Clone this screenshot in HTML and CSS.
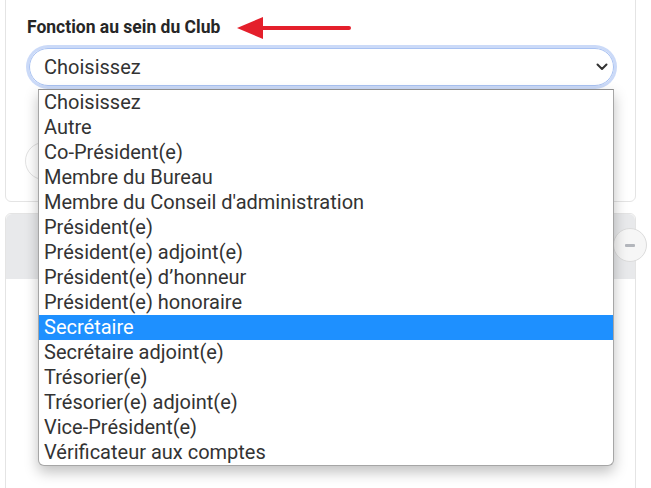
FILE: index.html
```html
<!DOCTYPE html>
<html lang="fr">
<head>
    <meta charset="UTF-8">
    <meta name="viewport" content="width=device-width, initial-scale=1.0">
    <title>Fonction au sein du Club</title>
    <link rel="stylesheet" href="styles.css">
</head>
<body>
    <div class="page">
        <div class="card card-top">
            <div class="field">
                <div class="label-row">
                    <label class="label">Fonction au sein du Club</label>
                    <svg class="arrow" width="116" height="24" viewBox="0 0 116 24">
                        <path d="M22 12 H112" stroke="#e41f2b" stroke-width="4" stroke-linecap="round"/>
                        <path d="M0 12 L26 1 L26 23 Z" fill="#e41f2b"/>
                    </svg>
                </div>
                <div class="select-wrap">
                    <div class="select focused">
                        <span>Choisissez</span>
                        <svg class="chevron" width="12" height="8" viewBox="0 0 12 8">
                            <path d="M1.5 1.5 L6 6 L10.5 1.5" fill="none" stroke="#333" stroke-width="2" stroke-linecap="round" stroke-linejoin="round"/>
                        </svg>
                    </div>
                    <!-- liste ouverte -->
                    <ul class="menu">
                        <li>Choisissez</li>
                        <li>Autre</li>
                        <li>Co-Président(e)</li>
                        <li>Membre du Bureau</li>
                        <li>Membre du Conseil d'administration</li>
                        <li>Président(e)</li>
                        <li>Président(e) adjoint(e)</li>
                        <li>Président(e) d’honneur</li>
                        <li>Président(e) honoraire</li>
                        <li class="active">Secrétaire</li>
                        <li>Secrétaire adjoint(e)</li>
                        <li>Trésorier(e)</li>
                        <li>Trésorier(e) adjoint(e)</li>
                        <li>Vice-Président(e)</li>
                        <li>Vérificateur aux comptes</li>
                    </ul>
                </div>
                <div class="select plain"></div>
            </div>
        </div>

        <div class="card card-bottom">
            <div class="card-header">
                <span class="toggle"><span class="minus"></span></span>
            </div>
            <div class="card-body"></div>
        </div>
    </div>
</body>
</html>
```

FILE: styles.css
```css
body {
    margin: 0;
    background: #fff;
    font-family: Roboto, "Noto Sans", sans-serif;
    color: #333;
    overflow: hidden;
}

.page {
    width: 631px;
    padding-left: 5px;
}

.card {
    border: 1px solid #e4e4e4;
    border-radius: 6px;
    background: #fff;
}

.card-top {
    margin-top: -10px;
    height: 212px;
    box-sizing: border-box;
    padding: 25px 20px 0 21px;
}

.label-row {
    display: flex;
    align-items: center;
    gap: 17px;
    height: 22px;
}

.label {
    font-weight: 700;
    font-size: 17.5px;
    color: #262626;
}

.arrow {
    display: block;
    margin-top: 2px;
}

.select-wrap {
    position: relative;
    margin: 10px 0 0 2px;
}

.select {
    height: 38px;
    box-sizing: border-box;
    border: 1px solid #cfcfcf;
    border-radius: 19px;
    display: flex;
    align-items: center;
    justify-content: space-between;
    padding: 0 5px 0 14px;
    font-size: 20px;
    width: 585px;
}

.select.focused {
    border-color: #a9c2f2;
    box-shadow: 0 0 0 3px #cbdaf8;
}

.select.plain {
    margin: 56px 0 0 -2px;
    height: 38px;
    border-color: #e2e2e2;
}

.chevron {
    display: block;
}

.menu {
    position: absolute;
    top: 41px;
    left: 9px;
    width: 576px;
    margin: 0;
    padding: 0;
    list-style: none;
    background: #fff;
    border: 1px solid #a6a6a6;
    border-top-color: #8f8f8f;
    border-radius: 0 0 6px 6px;
    box-shadow: 0 6px 14px rgba(0, 0, 0, 0.25);
    box-sizing: border-box;
    z-index: 2;
}

.menu li {
    height: 25px;
    line-height: 25px;
    padding-left: 5px;
    font-size: 20px;
    color: #333;
    white-space: nowrap;
}

.menu li.active {
    background: #1e90ff;
    color: #fff;
}

.card-bottom {
    position: relative;
    margin-top: 11px;
    height: 300px;
}

.card-header {
    height: 65px;
    background: #e8e9eb;
    border-radius: 6px 6px 0 0;
}

.toggle {
    position: absolute;
    top: 14px;
    right: -12px;
    width: 34px;
    height: 34px;
    box-sizing: border-box;
    border: 1px solid #dcdcdc;
    border-radius: 50%;
    background: #f6f6f6;
    display: flex;
    align-items: center;
    justify-content: center;
}

.minus {
    width: 10px;
    height: 3px;
    border-radius: 1px;
    background: #b3b6bc;
}
```
